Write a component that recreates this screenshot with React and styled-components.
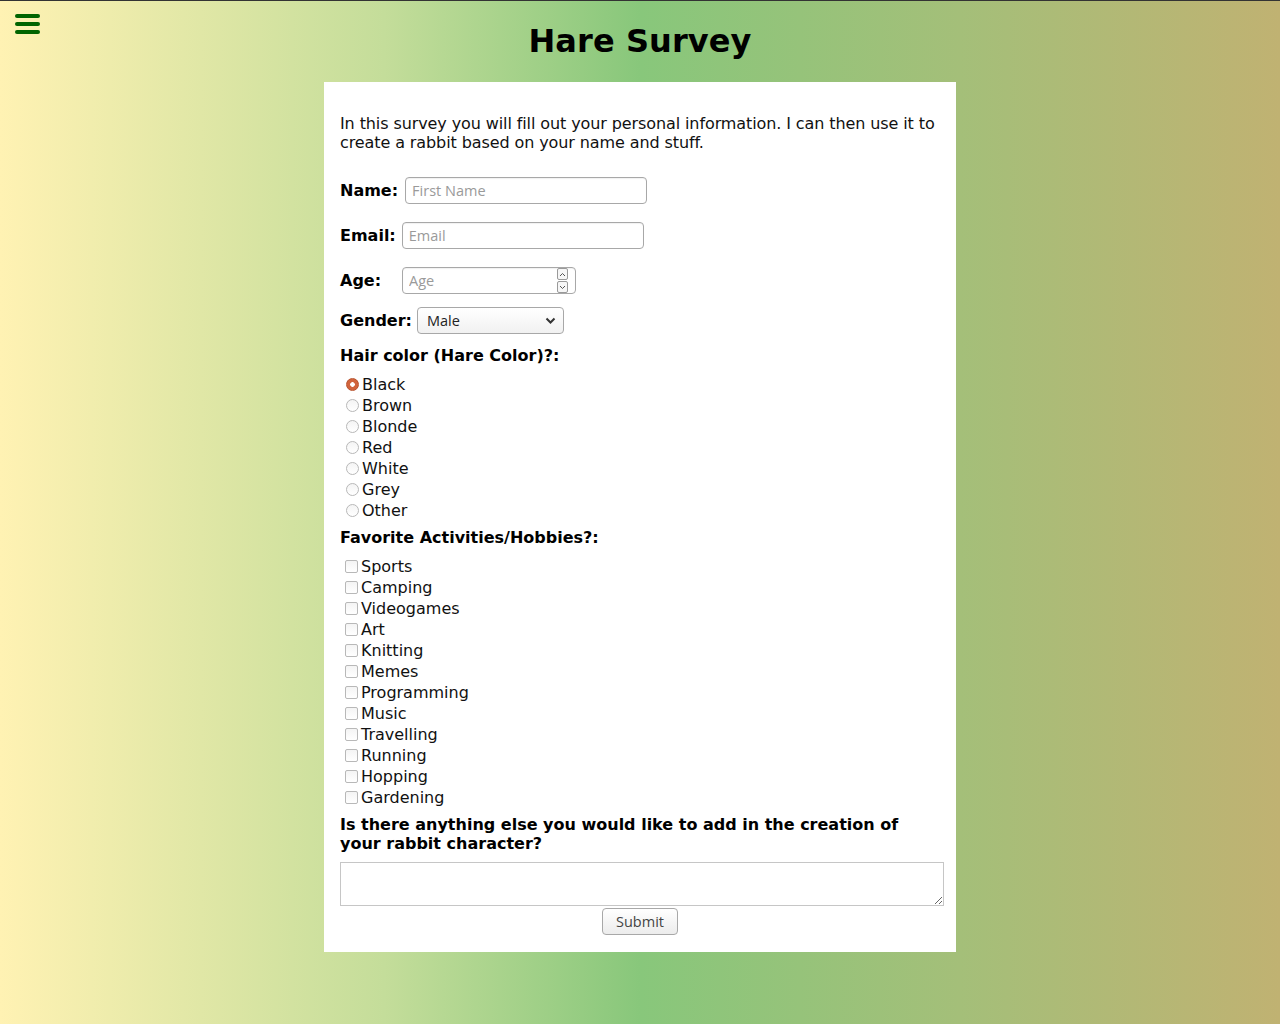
import styled, { createGlobalStyle } from 'styled-components';

const hairColors = ['Black', 'Brown', 'Blonde', 'Red', 'White', 'Grey', 'Other'];
const hobbies = [
  'Sports', 'Camping', 'Videogames', 'Art', 'Knitting', 'Memes',
  'Programming', 'Music', 'Travelling', 'Running', 'Hopping', 'Gardening',
];

const App = () => {
  return (
    <>
      <GlobalStyle />
      <Header>
        <MenuButton aria-label="menu">
          <svg width="29" height="24" viewBox="0 0 29 24">
            <g stroke="#006400" strokeWidth="4" strokeLinecap="round">
              <line x1="4" y1="4" x2="25" y2="4" />
              <line x1="4" y1="12" x2="25" y2="12" />
              <line x1="4" y1="20" x2="25" y2="20" />
            </g>
          </svg>
        </MenuButton>
        <Title>Hare Survey</Title>
        <span />
      </Header>

      <Card>
        <Intro>
          In this survey you will fill out your personal information. I can then use it to
          create a rabbit based on your name and stuff.
        </Intro>

        <FieldRow $top={25}>
          <Label $gap={7}>Name:</Label>
          <TextInput type="text" placeholder="First Name" $width={242} />
        </FieldRow>

        <FieldRow $top={18}>
          <Label $gap={6}>Email:</Label>
          <TextInput type="email" placeholder="Email" $width={242} />
        </FieldRow>

        <FieldRow $top={18}>
          <Label $width={62}>Age:</Label>
          <NumberBox>
            <TextInput type="number" placeholder="Age" $width={174} />
            <Spinner>
              <SpinBtn>
                <svg width="7" height="5" viewBox="0 0 7 5"><path d="M1 4 L3.5 1.5 L6 4" fill="none" stroke="#555" strokeWidth="1" /></svg>
              </SpinBtn>
              <SpinBtn>
                <svg width="7" height="5" viewBox="0 0 7 5"><path d="M1 1 L3.5 3.5 L6 1" fill="none" stroke="#555" strokeWidth="1" /></svg>
              </SpinBtn>
            </Spinner>
          </NumberBox>
        </FieldRow>

        <FieldRow $top={13}>
          <Label $gap={5}>Gender:</Label>
          <SelectBox>
            <Select defaultValue="Male">
              <option>Male</option>
              <option>Female</option>
              <option>Other</option>
            </Select>
            <Chevron width="11" height="7" viewBox="0 0 11 7">
              <path d="M1.5 1.5 L5.5 5.5 L9.5 1.5" fill="none" stroke="#333" strokeWidth="2" />
            </Chevron>
          </SelectBox>
        </FieldRow>

        <Question $top={12}>Hair color (Hare Color)?:</Question>
        <OptionList>
          {hairColors.map((c, i) => (
            <Option key={c}>
              <Radio type="radio" name="hair" defaultChecked={i === 0} />
              {c}
            </Option>
          ))}
        </OptionList>

        <Question $top={7}>Favorite Activities/Hobbies?:</Question>
        <OptionList>
          {hobbies.map((h) => (
            <Option key={h}>
              <Check type="checkbox" />
              {h}
            </Option>
          ))}
        </OptionList>

        <Question $top={7}>
          Is there anything else you would like to add in the creation of your rabbit character?
        </Question>
        <Notes />
        <Actions>
          <Submit type="submit">Submit</Submit>
        </Actions>
      </Card>
    </>
  );
}

const GlobalStyle = createGlobalStyle`
  html {
    min-height: 100%;
    background: linear-gradient(to right, #fff2b3 0%, #c4dd9a 30%, #88c77b 50%, #a4bf79 75%, #c0b272 100%);
  }
  body {
    margin: 0;
    min-height: 1023px;
    border-top: 1px solid #333;
    font-family: "DejaVu Sans", Verdana, sans-serif;
    color: #000;
  }
`;

// Header grid: menu on the left, title centered
const Header = styled.header`
  display: grid;
  grid-template-columns: 1fr auto 1fr;
  align-items: start;
`;

const MenuButton = styled.div`
  padding: 11px 0 0 13px;
  line-height: 0;
`;

const Title = styled.h1`
  margin: 21px 0 22px;
  font-size: 32px;
  line-height: 38px;
  font-weight: bold;
  letter-spacing: 0.1px;
`;

// White survey card
const Card = styled.form`
  width: 632px;
  box-sizing: border-box;
  margin: 0 auto;
  padding: 32px 16px 17px;
  background: #fff;
`;

const Intro = styled.p`
  margin: 0;
  font-size: 16px;
  line-height: 19px;
  letter-spacing: -0.1px;
  color: #111;
`;

const FieldRow = styled.div`
  display: flex;
  align-items: center;
  margin-top: ${(p) => p.$top}px;
`;

const Label = styled.label`
  font-weight: bold;
  font-size: 16px;
  margin-right: ${(p) => p.$gap ?? 0}px;
  ${(p) => p.$width && `width: ${p.$width}px;`}
`;

const TextInput = styled.input`
  box-sizing: border-box;
  width: ${(p) => p.$width}px;
  height: 27px;
  padding: 0 6px;
  border: 1px solid #a8a8a8;
  border-radius: 4px;
  box-shadow: inset 0 1px 1px rgba(0, 0, 0, 0.06);
  font-family: "Open Sans", sans-serif;
  font-size: 14.5px;
  color: #333;
  background: #fff;

  &::placeholder {
    color: #9a9a9a;
  }

  &::-webkit-inner-spin-button,
  &::-webkit-outer-spin-button {
    -webkit-appearance: none;
    margin: 0;
  }
`;

const NumberBox = styled.div`
  position: relative;
  display: inline-flex;
`;

// Custom number spinner drawn over the input's right edge
const Spinner = styled.div`
  position: absolute;
  right: 8px;
  top: 1px;
  display: flex;
  flex-direction: column;
  gap: 1px;
`;

const SpinBtn = styled.div`
  width: 9px;
  height: 10px;
  display: flex;
  align-items: center;
  justify-content: center;
  border: 1px solid #9a9a9a;
  border-radius: 2px;
  background: #f6f6f6;
`;

const SelectBox = styled.div`
  position: relative;
  display: inline-flex;
`;

const Select = styled.select`
  appearance: none;
  box-sizing: border-box;
  width: 147px;
  height: 27px;
  padding: 0 9px;
  border: 1px solid #a8a8a8;
  border-radius: 4px;
  background: linear-gradient(#ffffff, #f1f1f1);
  font-family: "Open Sans", sans-serif;
  font-size: 14.5px;
  color: #222;
`;

const Chevron = styled.svg`
  position: absolute;
  right: 8px;
  top: 10px;
  pointer-events: none;
`;

const Question = styled.h3`
  margin: ${(p) => p.$top}px 0 9px;
  font-size: 16px;
  line-height: 19px;
  font-weight: bold;
`;

const OptionList = styled.div`
  display: flex;
  flex-direction: column;
`;

const Option = styled.label`
  display: flex;
  align-items: center;
  height: 21px;
  font-size: 16px;
  color: #111;
`;

const Radio = styled.input`
  appearance: none;
  box-sizing: border-box;
  width: 13px;
  height: 13px;
  margin: 0 3px 0 6px;
  border: 1px solid #b8b8b8;
  border-radius: 50%;
  background: linear-gradient(#f4f4f4, #ffffff);

  &:checked {
    border-color: #b9532e;
    background: radial-gradient(circle, #fff 0 2px, #d1643c 2.6px);
  }
`;

const Check = styled.input`
  appearance: none;
  box-sizing: border-box;
  width: 13px;
  height: 13px;
  margin: 0 3px 0 5px;
  border: 1px solid #b8b8b8;
  border-radius: 2px;
  background: linear-gradient(#f4f4f4, #ffffff);
`;

const Notes = styled.textarea`
  display: block;
  box-sizing: border-box;
  width: 604px;
  height: 44px;
  margin: 0;
  border: 1px solid #c6c6c6;
  font-family: "Open Sans", sans-serif;
  font-size: 14px;
`;

const Actions = styled.div`
  display: flex;
  justify-content: center;
  margin-top: 2px;
`;

const Submit = styled.button`
  width: 76px;
  height: 27px;
  border: 1px solid #a8a8a8;
  border-radius: 4px;
  background: linear-gradient(#ffffff, #ececec);
  font-family: "Open Sans", sans-serif;
  font-size: 14.5px;
  color: #444;
`;

export default App;
